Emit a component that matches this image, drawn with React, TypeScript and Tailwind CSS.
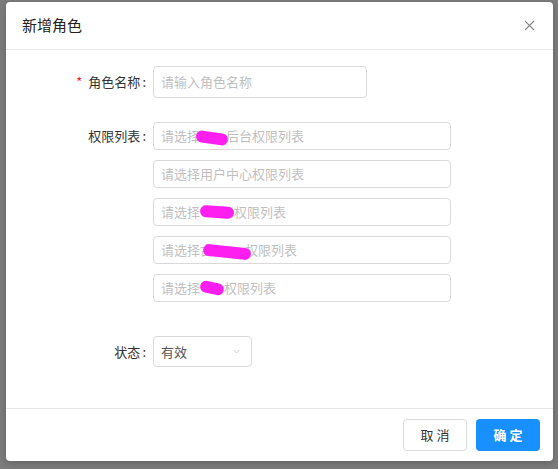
import { X, ChevronDown } from 'lucide-react';

const font = "font-['Noto_Sans_CJK_SC','Noto_Sans',sans-serif]";

function Blob({ w, rotate = '' }: { w: string; rotate?: string }) {
  return <span className={`inline-block h-[12px] rounded-full bg-[#ff1ef0] align-middle ${w} ${rotate}`} />;
}

function Row({ label, required, children, top }: { label: string; required?: boolean; children: React.ReactNode; top?: boolean }) {
  return (
    <div className={`flex ${top ? 'items-start' : 'items-center'}`}>
      <div className={`w-[141px] pr-[1px] text-right text-[13px] text-[#333] ${top ? 'pt-[4px]' : ''}`}>
        {required && <span className="mr-[6px] text-[#f5222d]">*</span>}
        {label}<span className="ml-[2px]">:</span>
      </div>
      <div className="ml-[6px]">{children}</div>
    </div>
  );
}

function Picker({ children }: { children: React.ReactNode }) {
  return (
    <div className="flex h-[28px] w-[298px] items-center whitespace-nowrap rounded-[4px] border border-[#d9d9d9] px-[7px] text-[13px] text-[#bfbfbf]">
      {children}
    </div>
  );
}

export default function App() {
  return (
    <div className={`h-[469px] w-[558px] overflow-hidden bg-[#7b7b7b] pl-[6px] pt-[2px] ${font}`}>
      <div className="flex h-[459px] w-[547px] flex-col rounded-[4px] bg-white shadow-[0_2px_6px_rgba(0,0,0,0.2)]">
        <div className="flex h-[48px] items-center justify-between border-b border-[#e8e8e8] pl-[16px] pr-[15px]">
          <span className="text-[15px] text-[#222]">新增角色</span>
          <X className="h-[17px] w-[17px] text-[#888]" strokeWidth={1.5} />
        </div>

        <div className="flex flex-1 flex-col pt-[16px]">
          <Row label="角色名称" required>
            <div className="flex h-[32px] w-[214px] items-center rounded-[4px] border border-[#d9d9d9] px-[7px] text-[13px] text-[#bfbfbf]">
              请输入角色名称
            </div>
          </Row>

          <div className="mt-[24px]">
            <Row label="权限列表" top>
              <div className="flex flex-col gap-[10px]">
                <Picker>
                  请选择<span className="-ml-[4px] -mr-[2px]"><Blob w="w-[32px]" rotate="rotate-[8deg]" /></span>后台权限列表
                </Picker>
                <Picker>请选择用户中心权限列表</Picker>
                <Picker>
                  请选择<Blob w="w-[34px]" rotate="rotate-[4deg]" />权限列表
                </Picker>
                <Picker>
                  请选择古<span className="-ml-[10px] -mr-[6px]"><Blob w="w-[48px]" rotate="rotate-[6deg]" /></span>权限列表
                </Picker>
                <Picker>
                  请选择<Blob w="w-[24px]" rotate="rotate-[12deg]" />权限列表
                </Picker>
              </div>
            </Row>
          </div>

          <div className="mt-[34px]">
            <Row label="状态">
              <div className="flex h-[31px] w-[99px] items-center justify-between rounded-[4px] border border-[#d9d9d9] pl-[7px] pr-[9px] text-[13px] text-[#555]">
                有效
                <ChevronDown className="h-[11px] w-[11px] text-[#bbb]" strokeWidth={1.6} />
              </div>
            </Row>
          </div>
        </div>

        <div className="flex h-[53px] items-center justify-end gap-[9px] border-t border-[#e8e8e8] pr-[13px]">
          <button className="h-[32px] w-[64px] rounded-[4px] border border-[#d9d9d9] bg-white text-[13px] text-[#333]">取 消</button>
          <button className="h-[32px] w-[64px] rounded-[4px] bg-[#1890ff] text-[13px] font-bold text-white">确 定</button>
        </div>
      </div>
    </div>
  );
}
